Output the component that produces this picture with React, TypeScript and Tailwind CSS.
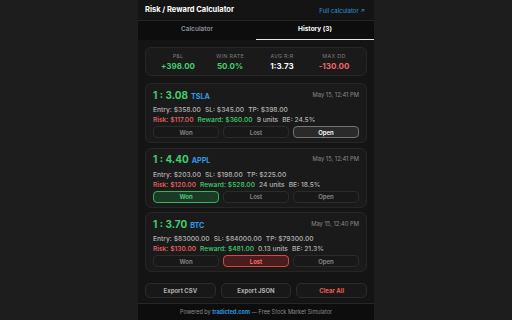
import { useState } from 'react';

interface Trade {
  ratio: string;
  ticker: string;
  date: string;
  entry: string;
  sl: string;
  tp: string;
  risk: string;
  reward: string;
  units: string;
  be: string;
  status: 'won' | 'lost' | 'open';
}

const trades: Trade[] = [
  { ratio: '1 : 3.08', ticker: 'TSLA', date: 'May 15, 12:41 PM', entry: '$358.00', sl: '$345.00', tp: '$398.00', risk: '$117.00', reward: '$360.00', units: '9 units', be: '24.5%', status: 'open' },
  { ratio: '1 : 4.40', ticker: 'APPL', date: 'May 15, 12:41 PM', entry: '$203.00', sl: '$198.00', tp: '$225.00', risk: '$120.00', reward: '$528.00', units: '24 units', be: '18.5%', status: 'won' },
  { ratio: '1 : 3.70', ticker: 'BTC', date: 'May 15, 12:40 PM', entry: '$83000.00', sl: '$84000.00', tp: '$79300.00', risk: '$130.00', reward: '$481.00', units: '0.13 units', be: '21.3%', status: 'lost' },
];

const stats = [
  { label: 'P&L', value: '+398.00', color: 'text-[#3fcf6f]' },
  { label: 'Win Rate', value: '50.0%', color: 'text-[#3fcf6f]' },
  { label: 'Avg R:R', value: '1:3.73', color: 'text-white' },
  { label: 'Max DD', value: '-130.00', color: 'text-[#f26464]' },
];

const StatusButton = ({ label, active, kind }: { label: string; active: boolean; kind: Trade['status'] }) => {
  let cls = 'bg-[#181818] border-[#2b2b2b] text-[#8a8a8a]';
  if (active && kind === 'won') cls = 'bg-[#1b3a25] border-[#34b25c] text-[#4fd97f]';
  if (active && kind === 'lost') cls = 'bg-[#4a1c1c] border-[#d24848] text-[#ff7a7a]';
  if (active && kind === 'open') cls = 'bg-[#2a2a2a] border-[#737373] text-white';
  return (
    <button className={`h-[12px] rounded-[4px] border flex items-center justify-center text-[6px] font-semibold ${cls}`}>
      {label}
    </button>
  );
};

const TradeCard = ({ t }: { t: Trade }) => (
  <div className="h-[60px] rounded-[6px] border border-[#262626] bg-[#1a1a1a] px-[7px] pt-[5px]">
    <div className="flex items-center justify-between h-[12px]">
      <div className="flex items-baseline gap-[3px]">
        <span className="text-[10px] font-bold text-[#3fcf6f]">{t.ratio}</span>
        <span className="text-[7.2px] font-bold text-[#2f9be6]">{t.ticker}</span>
      </div>
      <span className="text-[5.8px] text-[#8a8a8a]">{t.date}</span>
    </div>
    <div className="mt-[5px] text-[6.7px] font-medium text-[#b3b3b3] flex gap-[4px] leading-[8px]">
      <span>Entry: {t.entry}</span>
      <span>SL: {t.sl}</span>
      <span>TP: {t.tp}</span>
    </div>
    <div className="mt-[2px] text-[6.7px] font-medium flex gap-[4px] leading-[8px]">
      <span className="text-[#f26464]">Risk: {t.risk}</span>
      <span className="text-[#3fcf6f]">Reward: {t.reward}</span>
      <span className="text-[#b3b3b3]">{t.units}</span>
      <span className="text-[#b3b3b3]">BE: {t.be}</span>
    </div>
    <div className="mt-[2px] grid grid-cols-3 gap-[4px]">
      <StatusButton label="Won" active={t.status === 'won'} kind="won" />
      <StatusButton label="Lost" active={t.status === 'lost'} kind="lost" />
      <StatusButton label="Open" active={t.status === 'open'} kind="open" />
    </div>
  </div>
);

export default function App() {
  const [tab, setTab] = useState<'calc' | 'history'>('history');

  return (
    <div className="w-[512px] h-[320px] bg-[#1d1d1d] flex justify-center overflow-hidden" style={{ fontFamily: 'Inter, "Liberation Sans", sans-serif' }}>
      <div className="w-[236px] h-[320px] bg-[#141414] flex flex-col">
        {/* Header */}
        <div className="h-[21px] shrink-0 px-[7px] flex items-center justify-between border-b border-[#262626]">
          <h1 className="text-[7.5px] font-bold text-white">Risk / Reward Calculator</h1>
          <a className="text-[6px] text-[#2f93dc] pr-[2px]">Full calculator ↗</a>
        </div>

        {/* Tabs */}
        <div className="h-[19px] shrink-0 grid grid-cols-2 bg-[#0d0d0d]">
          <button
            onClick={() => setTab('calc')}
            className={`text-[6.5px] font-semibold border-b-[1.5px] ${tab === 'calc' ? 'text-white border-[#e6e6e6]' : 'text-[#8b909a] border-transparent'}`}
          >
            Calculator
          </button>
          <button
            onClick={() => setTab('history')}
            className={`text-[6.5px] font-bold border-b-[1.5px] ${tab === 'history' ? 'text-white border-[#e6e6e6]' : 'text-[#8b909a] border-transparent'}`}
          >
            History (3)
          </button>
        </div>

        {/* Body */}
        <div className="flex-1 px-[7px] pt-[7px]">
          <div className="h-[29px] rounded-[6px] border border-[#262626] bg-[#1a1a1a] grid grid-cols-4 px-[6px]">
            {stats.map((s) => (
              <div key={s.label} className="flex flex-col items-center justify-center gap-[2px]">
                <span className="text-[5.4px] uppercase tracking-[0.3px] text-[#7d7d7d] leading-[6px]">{s.label}</span>
                <span className={`text-[8px] font-bold leading-[10px] ${s.color}`}>{s.value}</span>
              </div>
            ))}
          </div>

          <div className="mt-[7px] flex flex-col gap-[4.5px]">
            {trades.map((t) => (
              <TradeCard key={t.ticker} t={t} />
            ))}
          </div>

          <div className="mt-[11px] grid grid-cols-3 gap-[5px]">
            <button className="h-[15px] rounded-[5px] border border-[#2b2b2b] bg-[#181818] text-[6px] font-bold text-[#b0b0b0]">Export CSV</button>
            <button className="h-[15px] rounded-[5px] border border-[#2b2b2b] bg-[#181818] text-[6px] font-bold text-[#b0b0b0]">Export JSON</button>
            <button className="h-[15px] rounded-[5px] border border-[#2b2b2b] bg-[#181818] text-[6px] font-bold text-[#f05a5a]">Clear All</button>
          </div>
        </div>

        {/* Footer */}
        <div className="h-[17px] shrink-0 border-t border-[#262626] bg-[#0d0d0d] flex items-center justify-center text-[5.5px] text-[#8a8a8a]">
          Powered by&nbsp;<span className="font-bold text-[#2f93dc]">tradicted.com</span>&nbsp;— Free Stock Market Simulator
        </div>
      </div>
    </div>
  );
}
